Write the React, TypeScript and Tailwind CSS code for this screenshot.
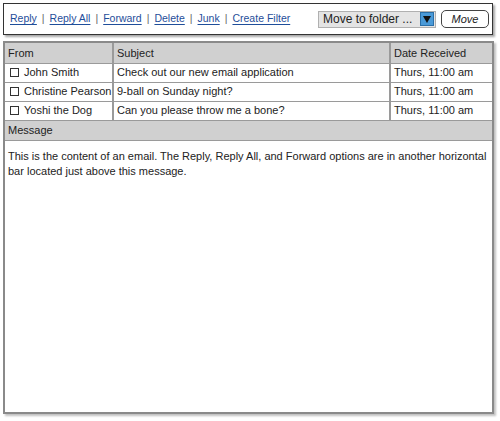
import React from 'react';

const links = ['Reply', 'Reply All', 'Forward', 'Delete', 'Junk', 'Create Filter'];

const emails = [
  { from: 'John Smith', subject: 'Check out our new email application', date: 'Thurs, 11:00 am' },
  { from: 'Christine Pearson', subject: '9-ball on Sunday night?', date: 'Thurs, 11:00 am' },
  { from: 'Yoshi the Dog', subject: 'Can you please throw me a bone?', date: 'Thurs, 11:00 am' },
];

const App: React.FC = () => {
  return (
    <div className="w-[500px] h-[421px] bg-white pt-[3px] pl-[3px] text-[11px] text-[#222] font-['Liberation_Sans',Arial,sans-serif]">
      {/* toolbar */}
      <div className="w-[490px] h-[32px] border-[1.5px] border-[#333] bg-white shadow-[2px_2px_2px_rgba(0,0,0,0.35)] flex items-center pl-[6px] pr-[3px]">
        <div className="flex items-center gap-[5px] flex-1 text-[10.5px]">
          {links.map((l, i) => (
            <React.Fragment key={l}>
              {i > 0 && <span className="text-[#666]">|</span>}
              <a className="text-[#1f4e9a] underline underline-offset-2 cursor-pointer whitespace-nowrap">{l}</a>
            </React.Fragment>
          ))}
        </div>
        <div className="flex items-center h-[17px] w-[118px] bg-[#e4e4e4] border border-[#b0b0b0] mr-[5px]">
          <span className="flex-1 pl-[4px] text-[12px] leading-none text-[#222] whitespace-nowrap overflow-hidden">Move to folder ...</span>
          <span className="w-[14px] h-[14px] mr-[1px] bg-[#4a9ad8] border border-[#2a6fa8] flex items-center justify-center">
            <svg width="8" height="7" viewBox="0 0 8 7"><path d="M0 0h8L4 7z" fill="#111" /></svg>
          </span>
        </div>
        <button className="w-[48px] h-[18px] rounded-[5px] border border-[#444] bg-white italic text-[11px] text-[#222] leading-none">Move</button>
      </div>

      {/* main panel */}
      <div className="mt-[6px] w-[491px] h-[373px] border-2 border-[#8a8a8a] bg-white shadow-[2px_2px_2px_rgba(0,0,0,0.25)] flex flex-col">
        <table className="w-full border-collapse table-fixed">
          <colgroup>
            <col className="w-[108px]" />
            <col className="w-[277px]" />
            <col />
          </colgroup>
          <thead>
            <tr className="bg-[#d0d0d0] h-[20px] text-left">
              <th className="font-normal pl-[3px] border-r-2 border-b border-[#9a9a9a]">From</th>
              <th className="font-normal pl-[3px] border-r-2 border-b border-[#9a9a9a]">Subject</th>
              <th className="font-normal pl-[3px] border-b border-[#9a9a9a]">Date Received</th>
            </tr>
          </thead>
          <tbody>
            {emails.map(e => (
              <tr key={e.from} className="h-[19px]">
                <td className="pl-[5px] border-r-2 border-b border-[#9a9a9a] whitespace-nowrap">
                  <span className="inline-block w-[9px] h-[9px] border border-[#333] mr-[5px] align-[-1px]"></span>
                  {e.from}
                </td>
                <td className="pl-[3px] border-r-2 border-b border-[#9a9a9a] whitespace-nowrap">{e.subject}</td>
                <td className="pl-[3px] border-b border-[#9a9a9a] whitespace-nowrap">{e.date}</td>
              </tr>
            ))}
          </tbody>
        </table>
        <div className="bg-[#d0d0d0] h-[20px] flex items-center pl-[3px] border-b border-[#9a9a9a]">Message</div>
        <p className="px-[3px] pt-[8px] leading-[15px]">
          This is the content of an email. The Reply, Reply All, and Forward options are in another horizontal bar located just above this message.
        </p>
      </div>
    </div>
  );
};

export default App;
